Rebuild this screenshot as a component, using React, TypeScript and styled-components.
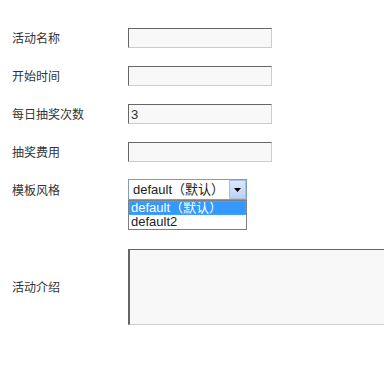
import React from "react";
import styled, { createGlobalStyle } from "styled-components";

const GlobalStyle = createGlobalStyle`
  html, body { margin: 0; padding: 0; background: #fff; overflow: hidden; }
  body { font-family: "Liberation Sans", "Noto Sans CJK SC", sans-serif; font-size: 12px; color: #333; }
`;

const fields = [
  { label: "活动名称", value: "" },
  { label: "开始时间", value: "" },
  { label: "每日抽奖次数", value: "3" },
  { label: "抽奖费用", value: "" },
];

const options = ["default（默认）", "default2"];

export default function App() {
  return (
    <>
      <GlobalStyle />
      <Form>
        {fields.map((f) => (
          <Row key={f.label}>
            <Label>{f.label}</Label>
            <TextInput defaultValue={f.value} />
          </Row>
        ))}

        <Row>
          <Label>模板风格</Label>
          <SelectWrap>
            <SelectBox>
              <SelectValue>{options[0]}</SelectValue>
              <ArrowBtn>
                <svg width="7" height="4" viewBox="0 0 7 4">
                  <path d="M0 0h7L3.5 4z" fill="#000" />
                </svg>
              </ArrowBtn>
            </SelectBox>
            <OptionList>
              {options.map((o, i) => (
                <Option key={o} $active={i === 0}>{o}</Option>
              ))}
            </OptionList>
          </SelectWrap>
        </Row>

        <Row $tall>
          <Label>活动介绍</Label>
          <TextArea />
        </Row>
      </Form>
    </>
  );
}

// ===================== styled ===================== //
const Form = styled.form`
  display: flex; flex-direction: column; gap: 18px;
  padding: 28px 0 0 12px;
`;

const Row = styled.div<{ $tall?: boolean }>`
  display: grid; grid-template-columns: 116px 256px; align-items: center;
  margin-top: ${({ $tall }) => ($tall ? "31px" : "0")};
`;

const Label = styled.label`
  font-size: 12px; color: #333; line-height: 14px;
  font-family: "Noto Sans CJK SC", sans-serif;
`;

const TextInput = styled.input`
  box-sizing: border-box; width: 144px; height: 20px; margin: 0;
  border: 1px solid; border-color: #666 #ccc #ccc #666;
  background: #f8f8f8; padding: 0 2px; outline: none;
  font: 13px "Liberation Sans", "Noto Sans CJK SC", sans-serif; color: #333;
`;

const SelectWrap = styled.div`
  position: relative; width: 119px; height: 21px; margin-top: -1px;
`;

const SelectBox = styled.div`
  box-sizing: border-box; width: 119px; height: 21px;
  display: flex; align-items: stretch;
  border: 1px solid #7f9db9; background: #fff;
`;

const SelectValue = styled.span`
  flex: 1; padding-left: 4px; line-height: 19px; font-size: 13px; color: #222;
  white-space: nowrap; overflow: hidden;
`;

const ArrowBtn = styled.span`
  box-sizing: border-box; width: 17px; margin: 0;
  display: grid; place-items: center;
  border: 1px solid #a7c1ec;
  background: linear-gradient(#dbe8fd, #bcd2f7);
`;

const OptionList = styled.div`
  position: absolute; left: 0; top: 21px; width: 119px; box-sizing: border-box;
  border: 1px solid #7f7f7f; background: #fff;
`;

const Option = styled.div<{ $active?: boolean }>`
  box-sizing: border-box; height: 14px; line-height: 12px; padding-left: 1px;
  font-size: 13px; white-space: nowrap; overflow: hidden;
  background: ${({ $active }) => ($active ? "#3399ff" : "#fff")};
  color: ${({ $active }) => ($active ? "#fff" : "#222")};
  border: 1px dotted ${({ $active }) => ($active ? "#e0883a" : "transparent")};
`;

const TextArea = styled.textarea`
  box-sizing: border-box; width: 256px; height: 76px; margin: 0; resize: none;
  border-style: solid; border-width: 1px 0 1px 2px;
  border-color: #666 #ccc #ccc #666;
  background: #f8f8f8; outline: none;
`;
